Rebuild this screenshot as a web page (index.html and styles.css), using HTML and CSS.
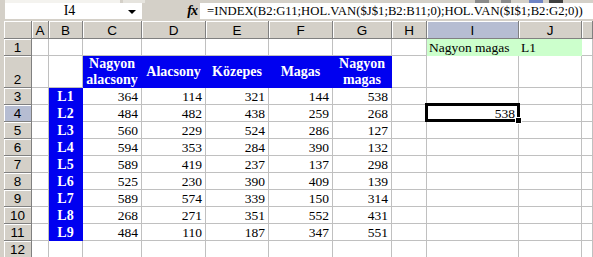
FILE: index.html
```html
<!DOCTYPE html>
<html>
<head>
<meta charset="utf-8">
<link rel="stylesheet" href="styles.css">
</head>
<body>
<div class="app">
  <div class="toolstrip">
    <span class="tb tb1"></span><span class="tb tb2"></span><span class="tb tb3"></span>
    <span class="tb tb4"></span><span class="tb tb5"></span><span class="tb tb6"></span>
  </div>
  <div class="fbar">
    <div class="namebox"><span class="nb-text">I4</span><span class="nb-arrow"></span></div>
    <div class="fx"><i>fx</i></div>
    <div class="formula"><span class="ftext">=INDEX(B2:G11;HOL.VAN($J$1;B2:B11;0);HOL.VAN($I$1;B2:G2;0))</span></div>
  </div>
  <div class="sheet">
    <div class="grid">
      <div class="hd corner"></div>
      <div class="hd ch">A</div><div class="hd ch">B</div><div class="hd ch">C</div><div class="hd ch">D</div><div class="hd ch">E</div><div class="hd ch">F</div><div class="hd ch">G</div><div class="hd ch">H</div><div class="hd ch sel">I</div><div class="hd ch">J</div><div class="hd ch last"></div>

      <div class="hd rh">1</div>
      <div class="c"></div><div class="c"></div><div class="c"></div><div class="c"></div><div class="c"></div><div class="c"></div><div class="c"></div><div class="c"></div>
      <div class="c green txt">Nagyon magas</div><div class="c green txt">L1</div><div class="c"></div>

      <div class="hd rh">2</div>
      <div class="c"></div><div class="c"></div>
      <div class="c blue th">Nagyon<br>alacsony</div><div class="c blue th">Alacsony</div><div class="c blue th">Közepes</div><div class="c blue th">Magas</div><div class="c blue th">Nagyon<br>magas</div>
      <div class="c"></div><div class="c"></div><div class="c"></div><div class="c"></div>

      <div class="hd rh">3</div><div class="c"></div><div class="c blue lb">L1</div>
      <div class="c n">364</div><div class="c n">114</div><div class="c n">321</div><div class="c n">144</div><div class="c n">538</div>
      <div class="c"></div><div class="c"></div><div class="c"></div><div class="c"></div>

      <div class="hd rh sel">4</div><div class="c"></div><div class="c blue lb">L2</div>
      <div class="c n">484</div><div class="c n">482</div><div class="c n">438</div><div class="c n">259</div><div class="c n">268</div>
      <div class="c"></div><div class="c n active">538</div><div class="c"></div><div class="c"></div>

      <div class="hd rh">5</div><div class="c"></div><div class="c blue lb">L3</div>
      <div class="c n">560</div><div class="c n">229</div><div class="c n">524</div><div class="c n">286</div><div class="c n">127</div>
      <div class="c"></div><div class="c"></div><div class="c"></div><div class="c"></div>

      <div class="hd rh">6</div><div class="c"></div><div class="c blue lb">L4</div>
      <div class="c n">594</div><div class="c n">353</div><div class="c n">284</div><div class="c n">390</div><div class="c n">132</div>
      <div class="c"></div><div class="c"></div><div class="c"></div><div class="c"></div>

      <div class="hd rh">7</div><div class="c"></div><div class="c blue lb">L5</div>
      <div class="c n">589</div><div class="c n">419</div><div class="c n">237</div><div class="c n">137</div><div class="c n">298</div>
      <div class="c"></div><div class="c"></div><div class="c"></div><div class="c"></div>

      <div class="hd rh">8</div><div class="c"></div><div class="c blue lb">L6</div>
      <div class="c n">525</div><div class="c n">230</div><div class="c n">390</div><div class="c n">409</div><div class="c n">139</div>
      <div class="c"></div><div class="c"></div><div class="c"></div><div class="c"></div>

      <div class="hd rh">9</div><div class="c"></div><div class="c blue lb">L7</div>
      <div class="c n">589</div><div class="c n">574</div><div class="c n">339</div><div class="c n">150</div><div class="c n">314</div>
      <div class="c"></div><div class="c"></div><div class="c"></div><div class="c"></div>

      <div class="hd rh">10</div><div class="c"></div><div class="c blue lb">L8</div>
      <div class="c n">268</div><div class="c n">271</div><div class="c n">351</div><div class="c n">552</div><div class="c n">431</div>
      <div class="c"></div><div class="c"></div><div class="c"></div><div class="c"></div>

      <div class="hd rh">11</div><div class="c"></div><div class="c blue lb">L9</div>
      <div class="c n">484</div><div class="c n">110</div><div class="c n">187</div><div class="c n">347</div><div class="c n">551</div>
      <div class="c"></div><div class="c"></div><div class="c"></div><div class="c"></div>

      <div class="hd rh">12</div><div class="c"></div><div class="c"></div>
      <div class="c"></div><div class="c"></div><div class="c"></div><div class="c"></div><div class="c"></div>
      <div class="c"></div><div class="c"></div><div class="c"></div><div class="c"></div>
    </div>
  </div>
</div>
</body>
</html>
```

FILE: styles.css
```css
* { box-sizing: border-box; margin: 0; padding: 0; }
html, body { width: 593px; height: 257px; overflow: hidden; background: #d4d0c8; }
.app { width: 593px; height: 257px; display: flex; flex-direction: column; background: #d4d0c8; }

.toolstrip { height: 4px; display: flex; position: relative; }
.tb { display: block; height: 3px; }
.tb1 { width: 115px; margin-left: 5px; background: #f4f3ef; }
.tb2 { width: 22px; margin-left: 3px; background: #e6e4de; }
.tb3 { width: 14px; margin-left: 330px; background: #8a8a8a; }
.tb4 { width: 10px; margin-left: 12px; background: #8a8a8a; }
.tb5 { width: 14px; margin-left: 18px; background: #6f84c4; }
.tb6 { width: 14px; margin-left: 6px; background: #404040; }

.fbar { height: 20px; display: flex; align-items: stretch; padding-bottom: 2px; }
.namebox { width: 137px; margin-left: 5px; background: #fff; display: flex; align-items: center; position: relative; }
.nb-text { flex: 1; text-align: center; font: 14px "Liberation Serif", serif; color: #000; padding-left: 6px; }
.nb-arrow { width: 0; height: 0; border-left: 4px solid transparent; border-right: 4px solid transparent; border-top: 4px solid #000; margin-right: 6px; margin-top: 1px; }
.fx { width: 58px; display: flex; align-items: center; justify-content: flex-end; padding-right: 3px; font: bold 14px "Liberation Serif", serif; color: #000; }
.fx i { font-style: italic; letter-spacing: -1px; }
.formula { flex: 1; min-width: 0; background: #fff; font: 13px "Liberation Serif", serif; color: #000; display: flex; align-items: center; padding-left: 7px; white-space: nowrap; overflow: hidden; }
.ftext { display: inline-block; transform: scaleX(0.976); transform-origin: left center; }

.sheet { flex: 1; border-left: 4px solid #d4d0c8; position: relative; box-shadow: inset 1px 0 0 #808080; }
.grid {
  display: grid;
  grid-template-columns: 28px 17px 34px 59px 64px 63px 64px 59px 35px 92px 63px 11px;
  grid-template-rows: 18px 17px 32px repeat(9, 17px) 17px;
  background: #fff;
}
.hd {
  background: #d4d0c8;
  border-right: 1px solid #808080;
  border-bottom: 1px solid #808080;
  box-shadow: inset 1px 1px 0 #fff;
  font: 13.5px "Liberation Sans", Arial, sans-serif;
  color: #000;
  display: flex; align-items: flex-end; justify-content: center;
  line-height: 15px;
}
.ch { align-items: center; padding-top: 1px; }
.hd.sel { background: #b6bdd2; }
.corner { background: #d4d0c8; }
.c {
  border-right: 1px solid #c0c0c0;
  border-bottom: 1px solid #c0c0c0;
  font: 13.5px "Liberation Serif", serif;
  color: #000;
  display: flex; align-items: flex-end;
  line-height: 15px;
  white-space: nowrap;
  position: relative;
}
.n { justify-content: flex-end; padding-right: 3px; }
.txt { padding-left: 2px; }
.green { background: #ccffcc; border-color: #ccffcc; }
.blue { background: #0000f0; border-color: #0000f0; color: #fff; font-weight: bold; justify-content: center; text-align: center; }
.th { font-size: 14px; line-height: 16px; align-items: center; }
.lb { align-items: flex-end; font-size: 14px; }
.active::after {
  content: ""; position: absolute; left: -2px; top: -2px; right: -2px; bottom: -1px;
  border: 3px solid #000;
}
.active::before {
  content: ""; position: absolute; right: -4px; bottom: -3px; width: 5px; height: 5px;
  background: #000; border: 1px solid #fff; z-index: 2;
}
```
